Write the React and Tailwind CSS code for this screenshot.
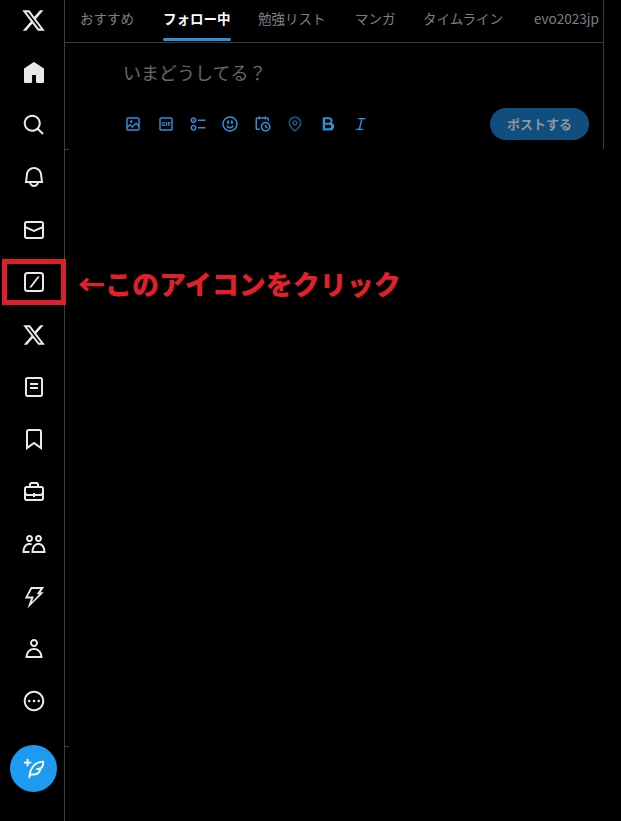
const jp = { fontFamily: '"Noto Sans CJK JP", "Noto Sans", sans-serif' };

function Icon({ d, className }) {
  return (
    <svg viewBox="0 0 24 24" className={className} fill="currentColor" fillRule="evenodd">
      <path d={d} />
    </svg>
  );
}

const xLogo = 'M18.244 2.25h3.308l-7.227 8.26 8.502 11.24H16.17l-5.214-6.817L4.99 21.75H1.68l7.73-8.835L1.254 2.25H8.08l4.713 6.231zm-1.161 17.52h1.833L7.084 4.126H5.117z';

const navIcons = [
  { name: 'home', d: 'M21.591 7.146L12.52 1.157c-.316-.21-.724-.21-1.04 0l-9.071 5.99c-.26.173-.409.456-.409.757v13.183c0 .502.418.913.929.913H9.14c.51 0 .929-.41.929-.913v-7.075h3.909v7.075c0 .502.417.913.928.913h6.165c.511 0 .929-.41.929-.913V7.904c0-.301-.158-.584-.408-.758z' },
  { name: 'search', d: 'M10.25 3.75c-3.59 0-6.5 2.91-6.5 6.5s2.91 6.5 6.5 6.5c1.795 0 3.419-.726 4.596-1.904 1.178-1.177 1.904-2.801 1.904-4.596 0-3.59-2.91-6.5-6.5-6.5zm-8.5 6.5c0-4.694 3.806-8.5 8.5-8.5s8.5 3.806 8.5 8.5c0 1.986-.682 3.815-1.824 5.262l4.781 4.781-1.414 1.414-4.781-4.781c-1.447 1.142-3.276 1.824-5.262 1.824-4.694 0-8.5-3.806-8.5-8.5z' },
  { name: 'bell', d: 'M19.993 9.042C19.48 5.017 16.054 2 11.996 2s-7.49 3.021-7.999 7.051L2.866 18H7.1c.463 2.282 2.481 4 4.9 4s4.437-1.718 4.9-4h4.236l-1.143-8.958zM12 20c-1.306 0-2.417-.835-2.829-2h5.658c-.412 1.165-1.523 2-2.829 2zm-6.866-4l.847-6.698C6.364 6.272 8.941 4 11.996 4s5.627 2.268 6.013 5.295L18.864 16H5.134z' },
  { name: 'mail', d: 'M1.998 5.5c0-1.381 1.119-2.5 2.5-2.5h15c1.381 0 2.5 1.119 2.5 2.5v13c0 1.381-1.119 2.5-2.5 2.5h-15c-1.381 0-2.5-1.119-2.5-2.5v-13zm2.5-.5c-.276 0-.5.224-.5.5v2.764l8 3.638 8-3.636V5.5c0-.276-.224-.5-.5-.5h-15zm15.5 5.463l-8 3.636-8-3.638V18.5c0 .276.224.5.5.5h15c.276 0 .5-.224.5-.5v-8.037z' },
  { name: 'grok', d: 'M2 5.5A3.5 3.5 0 0 1 5.5 2h13A3.5 3.5 0 0 1 22 5.5v13a3.5 3.5 0 0 1-3.5 3.5h-13A3.5 3.5 0 0 1 2 18.5zM5.5 4A1.5 1.5 0 0 0 4 5.5v13A1.5 1.5 0 0 0 5.5 20h13a1.5 1.5 0 0 0 1.5-1.5v-13A1.5 1.5 0 0 0 18.5 4zM15.6 6.5h2.2L9.4 17.5H7.2z' },
  { name: 'x', d: xLogo },
  { name: 'lists', d: 'M3 4.5C3 3.12 4.12 2 5.5 2h13C19.88 2 21 3.12 21 4.5v15c0 1.38-1.12 2.5-2.5 2.5h-13C4.12 22 3 20.88 3 19.5v-15zM5.5 4c-.28 0-.5.22-.5.5v15c0 .28.22.5.5.5h13c.28 0 .5-.22.5-.5v-15c0-.28-.22-.5-.5-.5h-13zM16 10H8V8h8v2zm-8 2h8v2H8v-2z' },
  { name: 'bookmark', d: 'M4 4.5C4 3.12 5.119 2 6.5 2h11C18.881 2 20 3.12 20 4.5v18.44l-8-5.71-8 5.71V4.5zM6.5 4c-.276 0-.5.22-.5.5v14.56l6-4.29 6 4.29V4.5c0-.28-.224-.5-.5-.5h-11z' },
  { name: 'jobs', d: 'M19.5 6H17V4.5C17 3.12 15.88 2 14.5 2h-5C8.12 2 7 3.12 7 4.5V6H4.5C3.12 6 2 7.12 2 8.5v10C2 19.88 3.12 21 4.5 21h15c1.38 0 2.5-1.12 2.5-2.5v-10C22 7.12 20.88 6 19.5 6zM9 4.5c0-.28.23-.5.5-.5h5c.28 0 .5.22.5.5V6H9V4.5zm11 14c0 .28-.22.5-.5.5h-15c-.27 0-.5-.22-.5-.5v-3.04c.59.35 1.27.54 2 .54h5v1h2v-1h5c.73 0 1.41-.19 2-.54v3.04zm0-6.49c0 1.1-.9 1.99-2 1.99h-5v-1h-2v1H6c-1.1 0-2-.9-2-2V8.5c0-.28.23-.5.5-.5h15c.28 0 .5.22.5.5v3.51z' },
  { name: 'communities', d: 'M7.501 19.917L7.471 21H.472l.029-1.027c.184-6.618 3.736-8.977 7-8.977.963 0 1.95.212 2.87.672-.444.478-.851 1.03-1.212 1.656-.507-.204-1.054-.329-1.658-.329-2.767 0-4.57 2.223-4.938 6.004H7.56c-.023.302-.05.599-.059.917zm15.998.056L23.528 21H9.472l.029-1.027c.184-6.618 3.736-8.977 7-8.977s6.816 2.358 7 8.977zM21.437 19c-.367-3.781-2.17-6.004-4.938-6.004s-4.57 2.223-4.938 6.004h9.875zm-4.938-9c-.799 0-1.527-.279-2.116-.73-.836-.64-1.384-1.638-1.384-2.77 0-1.93 1.567-3.5 3.5-3.5s3.5 1.57 3.5 3.5c0 1.132-.548 2.13-1.384 2.77-.589.451-1.317.73-2.116.73zm-1.5-3.5c0 .827.673 1.5 1.5 1.5s1.5-.673 1.5-1.5-.673-1.5-1.5-1.5-1.5.673-1.5 1.5zM7.5 3C9.433 3 11 4.57 11 6.5S9.433 10 7.5 10 4 8.43 4 6.5 5.567 3 7.5 3zm0 2C6.673 5 6 5.673 6 6.5S6.673 8 7.5 8 9 7.327 9 6.5 8.327 5 7.5 5z' },
  { name: 'premium', d: 'M8.8 2h13.4l-3.6 5.2h3.2L5.4 23.5l3.6-10H2.8zM10 4L5.7 11.5h6.2l-2 5.6 7.3-7.9h-2.5L18.3 4z' },
  { name: 'profile', d: 'M5.651 19h12.698c-.337-1.8-1.023-3.21-1.945-4.19C15.318 13.65 13.838 13 12 13s-3.317.65-4.404 1.81c-.922.98-1.608 2.39-1.945 4.19zm.486-5.56C7.627 11.85 9.648 11 12 11s4.373.85 5.863 2.44c1.477 1.58 2.366 3.8 2.632 6.46l.11 1.1H3.395l.11-1.1c.266-2.66 1.155-4.88 2.632-6.46zM12 4c-1.105 0-2 .9-2 2s.895 2 2 2 2-.9 2-2-.895-2-2-2zM8 6c0-2.21 1.791-4 4-4s4 1.79 4 4-1.791 4-4 4-4-1.79-4-4z' },
  { name: 'more', d: 'M3.75 12c0-4.56 3.69-8.25 8.25-8.25s8.25 3.69 8.25 8.25-3.69 8.25-8.25 8.25S3.75 16.56 3.75 12zM12 1.75C6.34 1.75 1.75 6.34 1.75 12S6.34 22.25 12 22.25 22.25 17.66 22.25 12 17.66 1.75 12 1.75zm-4.75 9c-.69 0-1.25.56-1.25 1.25s.56 1.25 1.25 1.25S8.5 12.69 8.5 12s-.56-1.25-1.25-1.25zm4.75 0c-.69 0-1.25.56-1.25 1.25s.56 1.25 1.25 1.25 1.25-.56 1.25-1.25-.56-1.25-1.25-1.25zm4.75 0c-.69 0-1.25.56-1.25 1.25s.56 1.25 1.25 1.25S18 12.69 18 12s-.56-1.25-1.25-1.25z' },
];

const tools = [
  { name: 'media', d: 'M3 5.5C3 4.119 4.119 3 5.5 3h13C19.881 3 21 4.119 21 5.5v13c0 1.381-1.119 2.5-2.5 2.5h-13C4.119 21 3 19.881 3 18.5v-13zM5.5 5c-.276 0-.5.224-.5.5v9.086l3-3 3 3 5-5 3 3V5.5c0-.276-.224-.5-.5-.5h-13zM19 15.414l-3-3-5 5-3-3-3 3V18.5c0 .276.224.5.5.5h13c.276 0 .5-.224.5-.5v-3.086zM9.75 7C8.784 7 8 7.784 8 8.75s.784 1.75 1.75 1.75 1.75-.784 1.75-1.75S10.716 7 9.75 7z' },
  { name: 'gif', d: 'M3 5.5C3 4.119 4.12 3 5.5 3h13C19.88 3 21 4.119 21 5.5v13c0 1.381-1.12 2.5-2.5 2.5h-13C4.12 21 3 19.881 3 18.5v-13zM5.5 5c-.28 0-.5.224-.5.5v13c0 .276.22.5.5.5h13c.28 0 .5-.224.5-.5v-13c0-.276-.22-.5-.5-.5h-13zM18 10.711V9.25h-3.74v5.5h1.44v-1.719h1.7V11.57h-1.7v-.859H18zM11.79 9.25h1.44v5.5h-1.44v-5.5zm-3.07 1.375c.34 0 .77.172 1.02.43l1.03-.86c-.51-.601-1.28-.945-2.05-.945C7.19 9.25 6 10.453 6 12s1.19 2.75 2.72 2.75c.85 0 1.54-.344 2.05-.945v-2.149H8.38v1.032H9.4v.515c-.17.086-.42.172-.68.172-.76 0-1.36-.602-1.36-1.375 0-.688.6-1.375 1.36-1.375z' },
  { name: 'poll', d: 'M6 5c-1.1 0-2 .895-2 2s.9 2 2 2 2-.895 2-2-.9-2-2-2zM2 7c0-2.209 1.79-4 4-4s4 1.791 4 4-1.79 4-4 4-4-1.791-4-4zm20 1H12V6h10v2zM6 15c-1.1 0-2 .895-2 2s.9 2 2 2 2-.895 2-2-.9-2-2-2zm-4 2c0-2.209 1.79-4 4-4s4 1.791 4 4-1.79 4-4 4-4-1.791-4-4zm20 1H12v-2h10v2zM7 7c0 .552-.45 1-1 1s-1-.448-1-1 .45-1 1-1 1 .448 1 1z' },
  { name: 'emoji', d: 'M8 9.5C8 8.119 8.672 7 9.5 7S11 8.119 11 9.5 10.328 12 9.5 12 8 10.881 8 9.5zm6.5 2.5c.828 0 1.5-1.119 1.5-2.5S15.328 7 14.5 7 13 8.119 13 9.5s.672 2.5 1.5 2.5zM12 16c-2.224 0-3.021-2.227-3.051-2.316l-1.897.633c.05.15 1.271 3.684 4.949 3.684s4.898-3.533 4.949-3.684l-1.896-.638c-.033.095-.83 2.322-3.053 2.322zm10.25-4c0 5.652-4.598 10.25-10.25 10.25S1.75 17.652 1.75 12 6.348 1.75 12 1.75 22.25 6.348 22.25 12zm-2 0c0-4.549-3.701-8.25-8.25-8.25S3.75 7.451 3.75 12s3.701 8.25 8.25 8.25 8.25-3.701 8.25-8.25z' },
  { name: 'schedule', d: 'M6 3V2h2v1h6V2h2v1h1.5C18.88 3 20 4.119 20 5.5v2h-2v-2c0-.276-.22-.5-.5-.5H16v1h-2V5H8v1H6V5H4.5c-.28 0-.5.224-.5.5v12c0 .276.22.5.5.5h3v2h-3C3.12 20 2 18.881 2 17.5v-12C2 4.119 3.12 3 4.5 3H6zm9.5 8c-2.49 0-4.5 2.015-4.5 4.5s2.01 4.5 4.5 4.5 4.5-2.015 4.5-4.5-2.01-4.5-4.5-4.5zM9 15.5C9 11.91 11.91 9 15.5 9s6.5 2.91 6.5 6.5-2.91 6.5-6.5 6.5S9 19.09 9 15.5zm5.5-2.5h2v2.086l1.71 1.707-1.42 1.414-2.29-2.293V13z' },
  { name: 'location', dim: true, d: 'M12 7c-1.93 0-3.5 1.57-3.5 3.5S10.07 14 12 14s3.5-1.57 3.5-3.5S13.93 7 12 7zm0 5c-.827 0-1.5-.673-1.5-1.5S11.173 9 12 9s1.5.673 1.5 1.5S12.827 12 12 12zm0-10c-4.687 0-8.5 3.813-8.5 8.5 0 5.967 7.621 11.116 7.945 11.332l.555.37.555-.37c.324-.216 7.945-5.365 7.945-11.332C20.5 5.813 16.687 2 12 2zm0 17.77c-1.665-1.241-6.5-5.196-6.5-9.27C5.5 6.916 8.416 4 12 4s6.5 2.916 6.5 6.5c0 4.073-4.835 8.028-6.5 9.27z' },
  { name: 'bold', d: 'M5 3h8.5a4.7 4.7 0 0 1 3.5 7.8 5.1 5.1 0 0 1-3 9.7H5zM8 5.8v4.4h5.3a2.2 2.2 0 0 0 0-4.4zM8 13v4.7h6a2.35 2.35 0 0 0 0-4.7z' },
  { name: 'italic', d: 'M9.5 4h10v1.7h-4l-3.2 12.6h4V20h-10v-1.7h4l3.2-12.6h-4z' },
];

const tabs = [
  { label: 'おすすめ', className: 'w-[83px] pl-[15px]' },
  { label: 'フォロー中', active: true, className: 'w-[95px] pl-[15px]' },
  { label: '勉強リスト', className: 'w-[97px] pl-[15px]' },
  { label: 'マンガ', className: 'w-[68px] pl-[15px]' },
  { label: 'タイムライン', className: 'w-[111px] pl-[15px]' },
  { label: 'evo2023jp', className: 'w-[85px] pl-[15px]' },
];

export default function App() {
  return (
    <div className="relative flex h-[821px] w-[621px] overflow-hidden bg-black" style={jp}>
      {/* left nav */}
      <nav className="flex w-[65px] shrink-0 flex-col items-center border-r border-[#3a3d40] pl-[3px] text-[#e7e9ea]">
        <div className="flex h-[41px] items-center justify-center">
          <Icon d={xLogo} className="h-[25px] w-[25px]" />
        </div>
        <div className="mt-[5.5px] flex flex-col">
          {navIcons.map((item) => (
            <div key={item.name} className="flex h-[52.4px] items-center justify-center">
              <Icon d={item.d} className="h-[24px] w-[24px]" />
            </div>
          ))}
        </div>
        <button className="mt-[17.5px] flex h-[47px] w-[47px] items-center justify-center rounded-full bg-[#1d9bf0] text-white">
          <Icon
            d="M23 3c-6.62-.1-10.38 2.421-13.05 6.03C7.29 12.61 6 17.331 6 22h2c0-1.007.07-2.012.19-3H12c4.1 0 7.48-3.082 7.94-7.054C22.79 10.147 23.17 6.359 23 3zm-7 8h-1.5v2H16c.63-.016 1.2-.08 1.72-.188C16.95 15.24 14.68 17 12 17H8.55c.57-2.512 1.57-4.851 3-6.78 2.16-2.912 5.29-4.911 9.45-5.187C20.95 8.079 19.9 11 16 11zM4 9V6H1V4h3V1h2v3h3v2H6v3H4z"
            className="h-[22px] w-[22px]"
          />
        </button>
      </nav>

      {/* main column */}
      <main className="h-[149px] w-[539px] shrink-0 border-r border-[#3a3d40]">
        <div className="flex h-[43px] border-b border-[#3a3d40] text-[13.5px] leading-[37px] text-[#7b8085]">
          {tabs.map((tab) => (
            <div key={tab.label} className={`relative shrink-0 whitespace-nowrap ${tab.className}`}>
              <span className={tab.active ? 'font-bold text-white' : ''}>{tab.label}</span>
              {tab.active && (
                <div className="absolute bottom-[1px] left-[15px] h-[3px] w-[68px] rounded-full bg-[#378fd3]" />
              )}
            </div>
          ))}
        </div>

        <div className="pl-[58px] pr-[14px]">
          <div className="h-[65px] pt-[16px] text-[18px] leading-[26px] text-[#666a6e]">いまどうしてる？</div>
          <div className="flex h-[32px] items-center">
            <div className="-ml-[6px] flex flex-1">
              {tools.map((tool) => (
                <div key={tool.name} className="flex w-[32.4px] items-center justify-center">
                  <Icon
                    d={tool.d}
                    className={`h-[18px] w-[18px] ${tool.dim ? 'text-[#1c5a87]' : 'text-[#2f8fd8]'}`}
                  />
                </div>
              ))}
            </div>
            <button className="h-[32px] w-[99px] rounded-full bg-[#0f4e7d] text-[13px] font-bold text-[#8f979e]">
              ポストする
            </button>
          </div>
        </div>
      </main>

      {/* little border stubs left over in the capture */}
      <div className="absolute left-[65px] top-[149px] h-px w-[4px] bg-[#3a3d40]" />
      <div className="absolute left-[65px] top-[746px] h-px w-[4px] bg-[#3a3d40]" />

      {/* red annotation */}
      <div className="absolute left-[2px] top-[259px] h-[46px] w-[64px] border-[5px] border-[#d9202c]" />
      <div className="absolute left-[78px] top-[264px] whitespace-nowrap text-[27px] font-black leading-[40px] text-[#e0202a]">
        ←このアイコンをクリック
      </div>
    </div>
  );
}
